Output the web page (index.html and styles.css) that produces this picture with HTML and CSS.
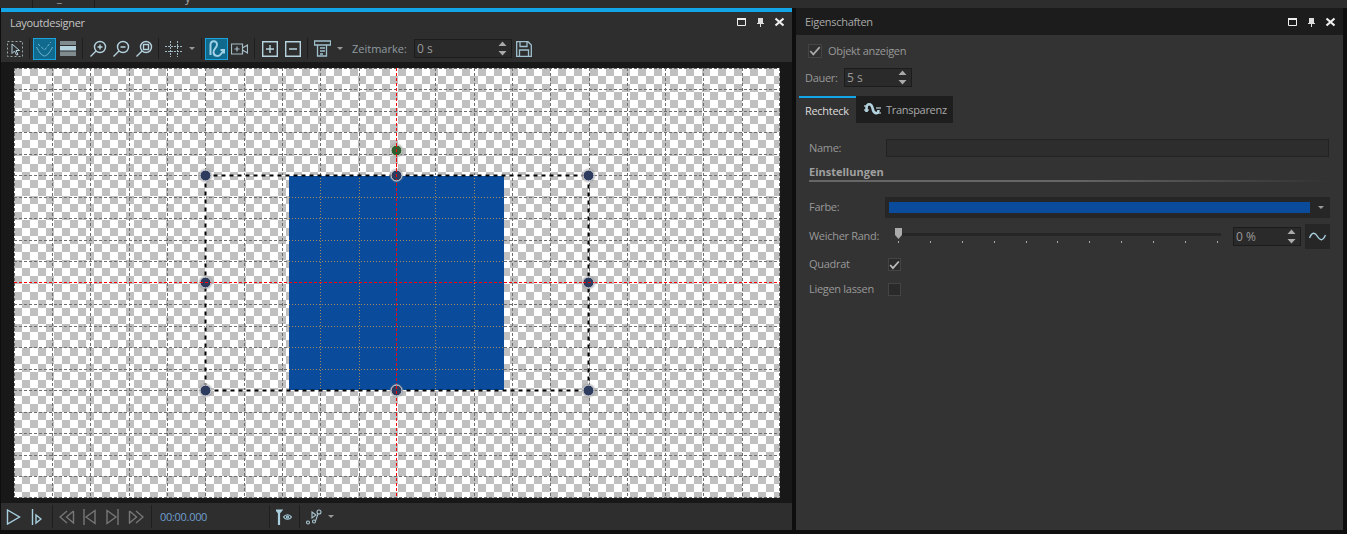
FILE: index.html
```html
<!DOCTYPE html>
<html lang="de">

<head>
    <meta charset="UTF-8">
    <title>Layoutdesigner</title>
    <link rel="stylesheet" href="styles.css">
</head>

<body>

    <svg class="defs" width="0" height="0">
        <symbol id="spin" viewBox="0 0 9 15">
            <path d="M4.5 0.5 L8.5 5 H0.5 Z M0.5 10 H8.5 L4.5 14.5 Z" fill="#aaa" />
        </symbol>
        <symbol id="caret" viewBox="0 0 6 3">
            <path d="M0 0 H6 L3 3 Z" fill="#999" />
        </symbol>
        <symbol id="winbtns" viewBox="0 0 47 10">
            <path d="M0.5 1.5 H8.5 V8.5 H0.5 Z" fill="none" stroke="#eee" stroke-width="1" />
            <path d="M0 1 H9 V3 H0 Z" fill="#eee" />
            <path d="M21 1 H26 V6 H27 V7 H24 V10 H23 V7 H20 V6 H21 Z" fill="#ddd" />
            <path d="M38.5 1.5 L46.5 8.5 M46.5 1.5 L38.5 8.5" stroke="#eee" stroke-width="2.2" fill="none" />
        </symbol>
    </svg>

    <div class="top-strip">
        <span class="top-tab first"></span>
        <span class="top-tab second"><span class="cut">_</span></span>
        <span class="top-tab third"><span class="cut">y</span></span>
    </div>

    <div class="panels">

        <section class="designer">
            <div class="title-bar">
                <span class="title">Layoutdesigner</span>
                <svg class="win-btns"><use href="#winbtns" /></svg>
            </div>

            <div class="toolbar">
                <div class="tool">
                    <svg width="18" height="18" viewBox="0 0 18 18" fill="none">
                        <path d="M1.5 1.5 H16.5 V16.5 H1.5 Z" stroke="#9aa" stroke-dasharray="2 2" />
                        <path d="M6 4 L13.5 10.5 H10 L12 14.5 L10.5 15 L8.5 11 L6 13.5 Z" stroke="#b5d3df" />
                    </svg>
                </div>
                <span class="sep"></span>
                <div class="tool on">
                    <svg width="19" height="18" viewBox="0 0 19 18" fill="none" stroke="#74b6d2">
                        <path d="M1.5 7 C4 12 6 15 9.5 16 C13 15 15 12 17.5 7" />
                        <path d="M3 4 L9.5 10 L16 2" stroke-dasharray="3 1.5" />
                    </svg>
                </div>
                <div class="tool">
                    <svg width="16" height="15" viewBox="0 0 16 15">
                        <path d="M0 0 H16 V4 H0 Z M0 10.5 H16 V15 H0 Z" fill="#7f8b8f" />
                        <path d="M0 5 H16 V9.5 H0 Z" fill="#b5d3df" />
                    </svg>
                </div>
                <span class="sep"></span>
                <div class="tool">
                    <svg width="18" height="18" viewBox="0 0 18 18" fill="none" stroke="#b5d3df" stroke-width="1.4">
                        <circle cx="11" cy="7" r="5.5" />
                        <path d="M7 11 L1.5 16.5 M8.5 7 H13.5 M11 4.5 V9.5" />
                    </svg>
                </div>
                <div class="tool">
                    <svg width="18" height="18" viewBox="0 0 18 18" fill="none" stroke="#b5d3df" stroke-width="1.4">
                        <circle cx="11" cy="7" r="5.5" />
                        <path d="M7 11 L1.5 16.5 M8.5 7 H13.5" />
                    </svg>
                </div>
                <div class="tool">
                    <svg width="18" height="18" viewBox="0 0 18 18" fill="none" stroke="#b5d3df" stroke-width="1.4">
                        <circle cx="11" cy="7" r="5.5" />
                        <path d="M7 11 L1.5 16.5 M8.5 4.5 H13.5 V9.5 H8.5 Z" />
                    </svg>
                </div>
                <span class="sep"></span>
                <div class="tool">
                    <svg width="18" height="16" viewBox="0 0 18 16" fill="none" stroke="#9fb8c2" stroke-dasharray="2 1">
                        <path d="M0 5.5 H18 M0 10.5 H18 M5.5 0 V16 M12.5 0 V16" />
                    </svg>
                </div>
                <div class="caret-box caret-grid"><svg class="caret"><use href="#caret" /></svg></div>
                <span class="sep"></span>
                <div class="tool on">
                    <svg width="21" height="20" viewBox="0 0 21 20" fill="none" stroke="#9fd0e4" stroke-width="2">
                        <path d="M4.5 16 V6 C4.5 1 11 1 11 5.5 C11 9 7 10 7.5 13.5 C8 17.5 13 18 15 15 L18 11 M14.5 11 H18 V14.5" />
                    </svg>
                </div>
                <div class="tool">
                    <svg width="17" height="12" viewBox="0 0 17 12" fill="none" stroke="#a5bcc5" stroke-width="1.2">
                        <path d="M0.5 1 H11.5 V11 H0.5 Z M3.5 6 H8.5 M6 3.5 V8.5 M11.5 5 L16.5 2 V10 L11.5 7" />
                    </svg>
                </div>
                <span class="sep"></span>
                <div class="tool">
                    <svg width="16" height="16" viewBox="0 0 16 16" fill="none" stroke="#b5d3df" stroke-width="1.4">
                        <path d="M0.7 0.7 H15.3 V15.3 H0.7 Z M4 8 H12 M8 4 V12" />
                    </svg>
                </div>
                <div class="tool">
                    <svg width="16" height="16" viewBox="0 0 16 16" fill="none" stroke="#b5d3df" stroke-width="1.4">
                        <path d="M0.7 0.7 H15.3 V15.3 H0.7 Z M4 8 H12" />
                    </svg>
                </div>
                <span class="sep"></span>
                <div class="tool">
                    <svg width="17" height="17" viewBox="0 0 17 17" fill="none" stroke="#9fc0cd" stroke-width="1.3">
                        <path d="M0.5 1 H16.5 V5 H0.5 Z M3.5 5 V16 H12.5 V5 M6 8 H11 M6 11 H11 M6 14 H9" />
                    </svg>
                </div>
                <div class="caret-box caret-layout"><svg class="caret"><use href="#caret" /></svg></div>
                <label class="stamp-label">Zeitmarke:</label>
                <div class="spin-input stamp-input">
                    <span>0 s</span>
                    <svg class="spin"><use href="#spin" /></svg>
                </div>
                <div class="tool">
                    <svg width="16" height="16" viewBox="0 0 16 16" fill="none" stroke="#9fc0cd" stroke-width="1.3">
                        <path d="M0.7 0.7 H12 L15.3 4 V15.3 H0.7 Z M4 0.7 V5.5 H11 V0.7 M3.5 15.3 V9 H12.5 V15.3" />
                    </svg>
                </div>
            </div>

            <div class="stage">
                <div class="canvas">
                    <svg class="overlay" width="766" height="430" viewBox="0 0 766 430" fill="none">
                        <path stroke="#6e6e6e" stroke-dasharray="3 2"
                            d="M38.5 0V430M76.5 0V430M115.5 0V430M153.5 0V430M191.5 0V430M230.5 0V430M268.5 0V430M306.5 0V430M345.5 0V430M421.5 0V430M460.5 0V430M498.5 0V430M536.5 0V430M575.5 0V430M613.5 0V430M651.5 0V430M689.5 0V430M728.5 0V430M0 21.5H766M0 43.5H766M0 64.5H766M0 86.5H766M0 107.5H766M0 129.5H766M0 150.5H766M0 172.5H766M0 193.5H766M0 236.5H766M0 258.5H766M0 279.5H766M0 301.5H766M0 322.5H766M0 344.5H766M0 365.5H766M0 387.5H766M0 408.5H766" />
                        <path stroke="#666" stroke-dasharray="3 2" d="M0 0.5H766M0.5 0V430M765.5 0V430M0 429.5H766" />
                        <rect x="275" y="107" width="215" height="215" fill="#0a4c9b" />
                        <path stroke="#a08a5c" stroke-dasharray="1 2"
                            d="M306.5 107V322M345.5 107V322M421.5 107V322M460.5 107V322M275 129.5H490M275 150.5H490M275 172.5H490M275 193.5H490M275 236.5H490M275 258.5H490M275 279.5H490M275 301.5H490" />
                        <rect x="191.5" y="107.5" width="383" height="215" stroke="#fff" />
                        <rect x="191.5" y="107.5" width="383" height="215" stroke="#000" stroke-width="2" stroke-dasharray="4 4" />
                        <path stroke="#f00" stroke-dasharray="3 2" d="M382.5 0V430M0 214.5H766" />
                        <g class="handles" fill="#2c3b5e" stroke="#e8e8e8">
                            <circle cx="191.5" cy="107.5" r="5.5" />
                            <circle cx="382.5" cy="107.5" r="5.5" />
                            <circle cx="574.5" cy="107.5" r="5.5" />
                            <circle cx="191.5" cy="214.5" r="5.5" />
                            <circle cx="574.5" cy="214.5" r="5.5" />
                            <circle cx="191.5" cy="322.5" r="5.5" />
                            <circle cx="382.5" cy="322.5" r="5.5" />
                            <circle cx="574.5" cy="322.5" r="5.5" />
                            <circle cx="382.5" cy="82.5" r="5.5" fill="#2f5f2f" />
                        </g>
                        <path stroke="#f00" stroke-dasharray="3 2" d="M382.5 76V112M382.5 318V328M186 214.5H197M569 214.5H580" />
                    </svg>
                </div>
            </div>

            <div class="playbar">
                <div class="play-btn">
                    <svg width="15" height="16" viewBox="0 0 15 16" fill="none" stroke="#a9d0e0" stroke-width="1.4">
                        <path d="M1.5 1 L13.5 8 L1.5 15 Z" />
                    </svg>
                </div>
                <div class="play-btn">
                    <svg width="11" height="16" viewBox="0 0 11 16" fill="none" stroke="#a9d0e0" stroke-width="1.4">
                        <path d="M1.5 0 V16 M5 6 L10 10 L5 14 Z" />
                    </svg>
                </div>
                <span class="sep"></span>
                <div class="play-btn">
                    <svg width="16" height="14" viewBox="0 0 16 14" fill="none" stroke="#777" stroke-width="1.4">
                        <path d="M8 1 L1 7 L8 13 M14.5 1 L7.5 7 L14.5 13 V1" />
                    </svg>
                </div>
                <div class="play-btn">
                    <svg width="13" height="16" viewBox="0 0 13 16" fill="none" stroke="#777" stroke-width="1.4">
                        <path d="M1 0 V16 M12 1.5 L3 8 L12 14.5 Z" />
                    </svg>
                </div>
                <div class="play-btn">
                    <svg width="13" height="16" viewBox="0 0 13 16" fill="none" stroke="#777" stroke-width="1.4">
                        <path d="M12 0 V16 M1 1.5 L10 8 L1 14.5 Z" />
                    </svg>
                </div>
                <div class="play-btn">
                    <svg width="16" height="14" viewBox="0 0 16 14" fill="none" stroke="#777" stroke-width="1.4">
                        <path d="M8 1 L15 7 L8 13 M1.5 1 L8.5 7 L1.5 13 V1" />
                    </svg>
                </div>
                <span class="sep"></span>
                <span class="time">00:00.000</span>
                <span class="sep"></span>
                <div class="play-btn marker">
                    <svg width="16" height="16" viewBox="0 0 16 16" fill="none" stroke="#a9d0e0" stroke-width="1.2">
                        <path d="M0 1 H6 L3.5 4 V16 H2.5 V4 Z" fill="#a9d0e0" />
                        <path d="M7.5 8 C9.5 5 13.5 5 15.5 8 C13.5 11 9.5 11 7.5 8 Z" />
                        <circle cx="11.5" cy="8" r="1" />
                    </svg>
                </div>
                <span class="sep"></span>
                <div class="play-btn music">
                    <svg width="16" height="16" viewBox="0 0 16 16" fill="none" stroke="#a9c4cf" stroke-width="1.1">
                        <circle cx="2" cy="13.5" r="1.5" />
                        <circle cx="8" cy="12.5" r="1.5" />
                        <circle cx="13" cy="3" r="2" />
                        <path d="M9.5 12 L12 5 M6 3 L10 6 L6 9 Z" />
                    </svg>
                </div>
                <svg class="caret"><use href="#caret" /></svg>
            </div>
        </section>

        <section class="props">
            <div class="title-bar props-title">
                <span class="title">Eigenschaften</span>
                <svg class="win-btns"><use href="#winbtns" /></svg>
            </div>

            <div class="check-row">
                <span class="check big">
                    <svg width="14" height="12" viewBox="0 0 14 12" fill="none" stroke="#aaa" stroke-width="2">
                        <path d="M1.5 6 L5 10 L12.5 1.5" />
                    </svg>
                </span>
                <span class="lbl">Objekt anzeigen</span>
            </div>

            <div class="duration-row">
                <span class="lbl duration-lbl">Dauer:</span>
                <div class="spin-input duration-input">
                    <span>5 s</span>
                    <svg class="spin"><use href="#spin" /></svg>
                </div>
            </div>

            <div class="tabs">
                <div class="tab active">Rechteck</div>
                <div class="tab">
                    <svg width="17" height="15" viewBox="0 0 17 15" fill="none">
                        <path d="M0 7 H5 V9 H0 Z M12 5 H17 V7 H12 Z M0 3 H3 V5 H0 Z M14 10 H17 V12 H14 Z" fill="#7f8b8f" />
                        <path d="M2.5 10 V6 C2.5 1 7.5 1 8.5 6 C9.5 12 14.5 13 14.5 8" stroke="#b5d3df" stroke-width="2.6" />
                    </svg>
                    <span>Transparenz</span>
                </div>
            </div>

            <div class="form-row name-row">
                <span class="lbl row-lbl">Name:</span>
                <div class="name-input"></div>
            </div>

            <div class="section-head">Einstellungen</div>
            <div class="section-line"></div>

            <div class="form-row color-row">
                <span class="lbl row-lbl">Farbe:</span>
                <div class="color-box">
                    <div class="swatch"></div>
                    <svg class="caret"><use href="#caret" /></svg>
                </div>
            </div>

            <div class="form-row soft-row">
                <span class="lbl row-lbl soft-lbl">Weicher Rand:</span>
                <div class="slider">
                    <div class="track"></div>
                    <svg class="thumb" width="7" height="11" viewBox="0 0 7 11">
                        <path d="M0 0 H7 V7 L3.5 11 L0 7 Z" fill="#aaa" />
                    </svg>
                    <div class="ticks">
                        <i></i><i></i><i></i><i></i><i></i><i></i><i></i><i></i><i></i><i></i><i></i>
                    </div>
                </div>
                <div class="spin-input percent-input">
                    <span>0 %</span>
                    <svg class="spin"><use href="#spin" /></svg>
                </div>
                <div class="wave-btn">
                    <svg width="17" height="9" viewBox="0 0 17 9" fill="none" stroke="#a9d0e0" stroke-width="1.4">
                        <path d="M0.5 6 C3 0 6 0 8.5 4.5 C11 9 14 9 16.5 3" />
                    </svg>
                </div>
            </div>

            <div class="form-row square-row">
                <span class="lbl row-lbl">Quadrat</span>
                <span class="check">
                    <svg width="11" height="10" viewBox="0 0 14 12" fill="none" stroke="#bbb" stroke-width="2.2">
                        <path d="M1.5 6 L5 10 L12.5 1.5" />
                    </svg>
                </span>
            </div>

            <div class="form-row stay-row">
                <span class="lbl row-lbl">Liegen lassen</span>
                <span class="check"></span>
            </div>
        </section>

    </div>

</body>

</html>
```

FILE: styles.css
```css
* {
    box-sizing: border-box;
}

body {
    margin: 0;
    width: 1347px;
    height: 534px;
    overflow: hidden;
    background: #0e0e0e;
    font-family: 'Open Sans', 'Noto Sans', sans-serif;
    font-size: 11px;
    letter-spacing: -0.3px;
    color: #9c9c9c;
}

.defs {
    position: absolute;
}

/* strip of the window behind */
.top-strip {
    display: flex;
    height: 8px;
    background: #2d2d2d;
    overflow: hidden;
}

.top-tab {
    height: 8px;
    border-right: 1px solid #1e1e1e;
    line-height: 8px;
    color: #aaa;
}

.top-tab.first {
    width: 33px;
}

.top-tab.second {
    width: 62px;
    padding-left: 24px;
}

.top-tab.third {
    width: 100px;
    padding-left: 90px;
    border-right: none;
}

.cut {
    display: block;
    margin-top: -6px;
}

.panels {
    display: flex;
    height: 522px;
}

.designer {
    display: flex;
    flex-direction: column;
    width: 791px;
    margin-left: 1px;
    margin-right: 4px;
    background: #2e2e2e;
    border-top: 4px solid #12a5e8;
}

.title-bar {
    display: flex;
    align-items: center;
    justify-content: space-between;
    height: 23px;
    padding: 0 8px 3px 9px;
}

.title {
    color: #c4c4c4;
}

.win-btns {
    width: 47px;
    height: 10px;
}

.toolbar {
    display: flex;
    align-items: center;
    height: 27px;
    padding-left: 2px;
}

.tool {
    display: flex;
    align-items: center;
    justify-content: center;
    width: 23px;
    height: 22px;
    flex: none;
}

.tool.on {
    background: #0f6a8e;
    border: 1px solid #1aa3dc;
}

.sep {
    width: 1px;
    height: 21px;
    margin: 0 3px;
    background: #1f1f1f;
    flex: none;
}

.caret-box {
    display: flex;
    align-items: center;
    justify-content: center;
    flex: none;
}

.caret-grid {
    width: 13px;
}

.caret-layout {
    width: 12px;
}

.caret {
    width: 6px;
    height: 3px;
}

.stamp-label {
    width: 62px;
    margin-left: 6px;
    letter-spacing: 0;
    color: #8f9aa0;
    flex: none;
}

.spin-input {
    display: flex;
    align-items: center;
    justify-content: space-between;
    height: 19px;
    padding: 0 3px 0 2px;
    background: #2a2a2a;
    border: 1px solid #1c1c1c;
    font-size: 12px;
    letter-spacing: 0;
    color: #999;
    flex: none;
}

.spin {
    width: 9px;
    height: 15px;
    margin-right: 1px;
}

.stamp-input {
    width: 98px;
}

.stage {
    height: 441px;
    padding: 6px 12px 5px 13px;
    background: #181818;
}

.canvas {
    position: relative;
    width: 766px;
    height: 430px;
    background: repeating-conic-gradient(#fff 0 25%, #c0c0c0 0 50%) 0 0 / 16px 16px;
}

.overlay {
    position: absolute;
    left: 0;
    top: 0;
}

.handles {
    filter: drop-shadow(0 0 1px #777);
}

.playbar {
    display: flex;
    align-items: center;
    height: 27px;
    padding-left: 1px;
}

.playbar .sep {
    height: 23px;
    margin: 0 2px 0 4px;
}

.play-btn {
    display: flex;
    align-items: center;
    justify-content: center;
    width: 23px;
    height: 27px;
    flex: none;
}

.time {
    width: 111px;
    padding-left: 6px;
    color: #6f9fcf;
    flex: none;
}

.music {
    margin-right: 3px;
}

/* right panel */
.props {
    width: 547px;
    height: 522px;
    background: #333;
}

.props-title {
    height: 27px;
    padding: 0 8px 0 9px;
    background: #1c1c1c;
}

.props-title .title {
    color: #a8a8a8;
}

.lbl {
    margin-bottom: 2px;
    color: #989898;
}

.check-row {
    display: flex;
    align-items: center;
    gap: 6px;
    margin-top: 9px;
    margin-left: 12px;
    height: 14px;
}

.check {
    display: flex;
    align-items: center;
    justify-content: center;
    width: 13px;
    height: 13px;
    background: #2a2a2a;
    border: 1px solid #444;
    flex: none;
}

.check.big {
    width: 14px;
    height: 14px;
    background: #303030;
}

.duration-row {
    display: flex;
    align-items: center;
    margin-top: 10px;
    margin-left: 9px;
}

.duration-lbl {
    width: 39px;
    margin-bottom: 0;
}

.duration-input {
    width: 68px;
}

.tabs {
    display: flex;
    height: 27px;
    margin-top: 9px;
    margin-left: 3px;
}

.tab {
    display: flex;
    align-items: center;
    gap: 5px;
    width: 97px;
    padding-left: 8px;
    background: #1e1e1e;
    color: #a8a8a8;
}

.tab.active {
    width: 57px;
    padding-left: 6px;
    background: #333;
    border-top: 2px solid #12a5e8;
    color: #ddd;
}

.form-row {
    display: flex;
    align-items: center;
    padding-left: 13px;
    padding-right: 13px;
}

.row-lbl {
    width: 79px;
    flex: none;
}

.name-row {
    height: 18px;
    margin-top: 16px;
}

.name-input {
    flex: 1;
    height: 18px;
    margin-left: -2px;
    margin-right: 1px;
    background: #2d2d2d;
    border: 1px solid #222;
}

.section-head {
    height: 16px;
    margin-top: 7px;
    margin-left: 13px;
    line-height: 16px;
    font-weight: bold;
    letter-spacing: 0;
    color: #a0a0a0;
}

.section-line {
    height: 2px;
    margin-left: 13px;
    margin-right: 14px;
    background: linear-gradient(to right, #666, #666 50%, #333);
}

.color-row {
    height: 21px;
    margin-top: 15px;
}

.color-box {
    display: flex;
    align-items: center;
    gap: 8px;
    flex: 1;
    height: 21px;
    margin-left: -3px;
    padding-left: 4px;
    background: #262626;
}

.swatch {
    width: 421px;
    height: 11px;
    background: #0a4c9b;
}

.soft-row {
    height: 25px;
    margin-top: 6px;
}

.soft-lbl {
    width: 87px;
}

.slider {
    position: relative;
    width: 325px;
    height: 25px;
    flex: none;
}

.track {
    height: 3px;
    margin-top: 9px;
    background: #262626;
}

.thumb {
    position: absolute;
    left: -1px;
    top: 4px;
}

.ticks {
    display: flex;
    justify-content: space-between;
    margin: 5px 3px 0 2px;
}

.ticks i {
    width: 1px;
    height: 2px;
    background: #aaa;
}

.percent-input {
    width: 68px;
    margin-left: 12px;
}

.wave-btn {
    display: flex;
    align-items: center;
    justify-content: center;
    width: 25px;
    height: 25px;
    margin-left: 4px;
    background: #262626;
}

.square-row {
    height: 13px;
    margin-top: 9px;
}

.stay-row {
    height: 13px;
    margin-top: 12px;
}
```
